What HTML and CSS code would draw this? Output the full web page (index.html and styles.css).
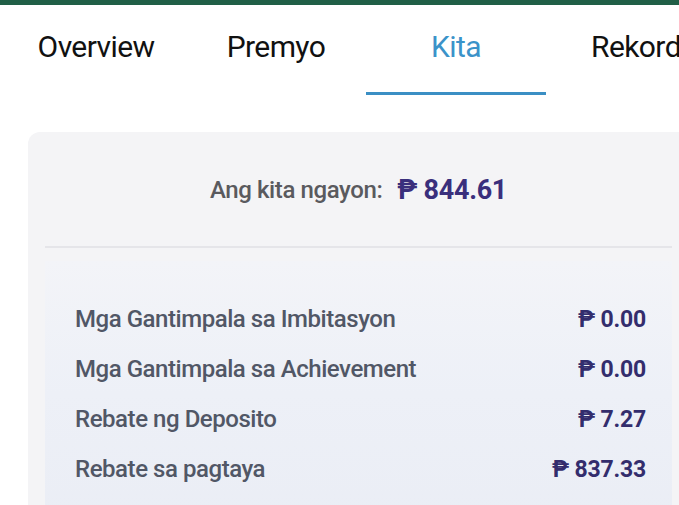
FILE: index.html
```html
<!DOCTYPE html>
<html lang="tl">
<head>
<meta charset="utf-8">
<title>Kita</title>
<link rel="stylesheet" href="styles.css">
</head>
<body>
<div class="topbar"></div>
<nav class="tabs">
  <div class="tab">Overview</div>
  <div class="tab">Premyo</div>
  <div class="tab active">Kita</div>
  <div class="tab">Rekord</div>
</nav>
<section class="card">
  <div class="today">
    <span class="today-label">Ang kita ngayon:</span>
    <span class="today-amount">₱ 844.61</span>
  </div>
  <div class="breakdown">
    <div class="row"><span class="label">Mga Gantimpala sa Imbitasyon</span><span class="value">₱ 0.00</span></div>
    <div class="row"><span class="label">Mga Gantimpala sa Achievement</span><span class="value">₱ 0.00</span></div>
    <div class="row"><span class="label">Rebate ng Deposito</span><span class="value">₱ 7.27</span></div>
    <div class="row"><span class="label">Rebate sa pagtaya</span><span class="value">₱ 837.33</span></div>
  </div>
</section>
</body>
</html>
```
FILE: styles.css
```css
html, body {
  margin: 0;
  padding: 0;
  background: #ffffff;
  overflow: hidden;
  font-family: Roboto, "Noto Sans", "DejaVu Sans", sans-serif;
}
body {
  width: 679px;
  height: 505px;
}
.topbar {
  height: 5px;
  background: #215f47;
}
.tabs {
  display: flex;
  padding-left: 6px;
  white-space: nowrap;
}
.tab {
  flex: 0 0 180px;
  height: 90px;
  box-sizing: border-box;
  display: flex;
  align-items: center;
  justify-content: center;
  padding-bottom: 3px;
  border-bottom: 3px solid transparent;
  font-size: 30px;
  letter-spacing: -0.6px;
  line-height: 1;
  color: #111111;
}
.tab.active {
  color: #3b93c9;
  border-bottom-color: #3b8fc4;
}
.card {
  margin: 37px 0 0 28px;
  padding: 0 7px 0 17px;
  background: #f4f4f6;
  border-radius: 12px 0 0 0;
  height: 400px;
}
.today {
  height: 116px;
  display: flex;
  align-items: center;
  justify-content: center;
  gap: 15px;
  border-bottom: 2px solid #e5e5e9;
  padding-top: 2px;
  box-sizing: border-box;
}
.today-label {
  font-size: 24px;
  letter-spacing: -0.4px;
  font-weight: 500;
  color: #5a5a5e;
}
.today-amount {
  font-size: 27px;
  letter-spacing: -0.3px;
  font-weight: 700;
  color: #3a2f7c;
}
.breakdown {
  margin-top: 13px;
  padding: 33px 26px 0 30px;
  background: linear-gradient(180deg, #f3f4f8 0%, #edf0f7 40%, #e9ecf4 100%);
  height: 300px;
}
.row {
  height: 50px;
  display: flex;
  align-items: center;
  justify-content: space-between;
}
.label {
  font-size: 24px;
  letter-spacing: -0.45px;
  font-weight: 500;
  color: #515766;
}
.value {
  font-size: 23px;
  letter-spacing: -0.2px;
  font-weight: 700;
  color: #332d6d;
}
```
